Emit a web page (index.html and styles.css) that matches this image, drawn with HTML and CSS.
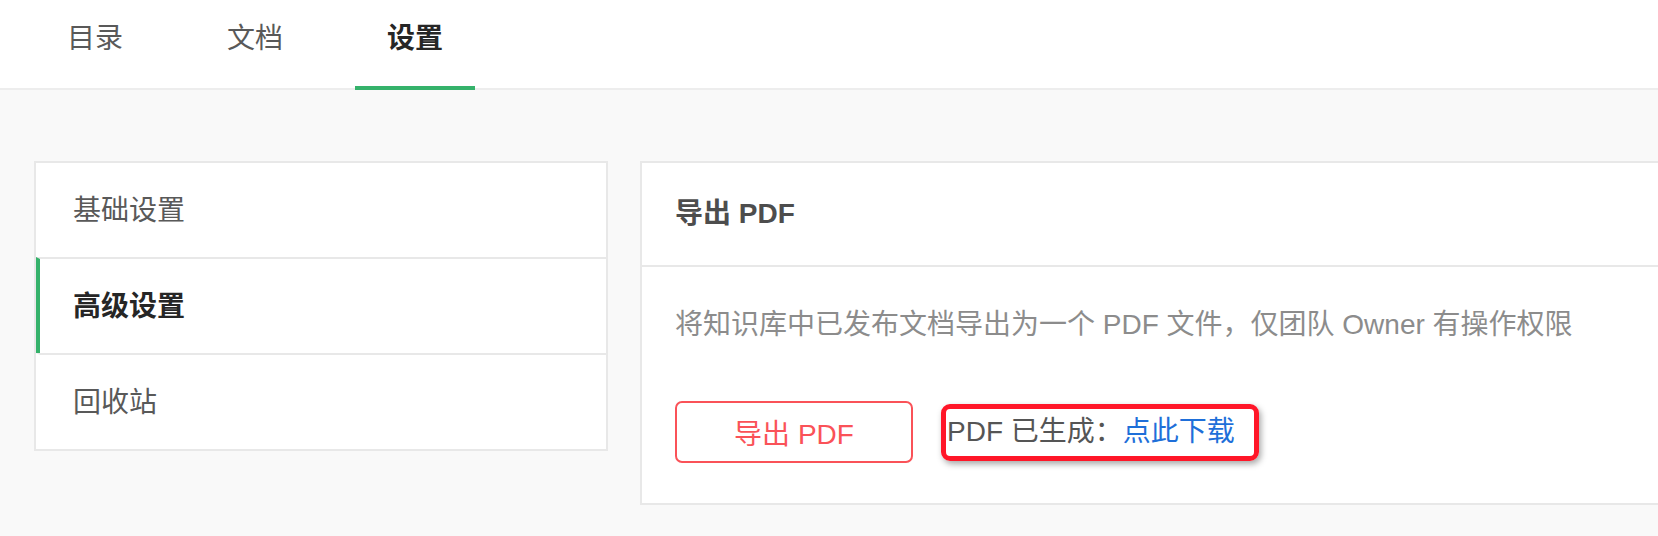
FILE: index.html
```html
<!DOCTYPE html>
<html lang="zh-CN">
<head>
    <meta charset="utf-8">
    <title>设置 - 导出 PDF</title>
    <link rel="stylesheet" href="styles.css">
</head>
<body>
    <div class="top-nav">
        <a class="tab">目录</a>
        <a class="tab">文档</a>
        <a class="tab active">设置</a>
    </div>
    <div class="page">
        <ul class="side-menu">
            <li class="menu-item">基础设置</li>
            <li class="menu-item active">高级设置</li>
            <li class="menu-item">回收站</li>
        </ul>
        <div class="panel">
            <div class="panel-header">导出 PDF</div>
            <div class="panel-body">
                <p class="desc">将知识库中已发布文档导出为一个 PDF 文件，仅团队 Owner 有操作权限</p>
                <div class="actions">
                    <button class="btn-export">导出 PDF</button>
                    <span class="status">PDF 已生成：<a class="download">点此下载</a></span>
                </div>
            </div>
        </div>
    </div>
</body>
</html>
```

FILE: styles.css
```css
/* Base page */
body {
    margin: 0;
    background-color: #f9f9f9;
    font-family: "Liberation Sans", "Noto Sans CJK SC", sans-serif;
    font-size: 28px;
    color: #595959;
    overflow: hidden; /* panel runs past the right edge */
}

/* Top tabs */
.top-nav {
    display: flex;
    gap: 40px;
    height: 90px;
    box-sizing: border-box;
    padding-left: 35px;
    background-color: #fff;
    border-bottom: 2px solid #ededed;
}

.tab {
    width: 120px;
    height: 90px;
    box-sizing: border-box;
    padding-top: 24px;
    line-height: 30px;
    text-align: center;
    color: #595959;
    border-bottom: 4px solid transparent;
}

.tab.active {
    color: #262626;
    font-weight: bold;
    border-bottom-color: #35b26b;
}

/* Content area */
.page {
    display: flex;
    align-items: flex-start;
    gap: 32px;
    padding: 71px 0 0 34px;
}

/* Left menu */
.side-menu {
    list-style: none;
    margin: 0;
    padding: 0;
    width: 574px;
    flex-shrink: 0;
    box-sizing: border-box;
    background-color: #fff;
    border: 2px solid #e8e8e8;
}

.menu-item {
    height: 94px;
    line-height: 96px;
    padding-left: 33px;
    border-top: 2px solid #e8e8e8;
    border-left: 4px solid transparent;
}

.menu-item:first-child {
    border-top: none;
}

.menu-item.active {
    color: #262626;
    font-weight: bold;
    border-left-color: #35b26b;
}

/* Right panel */
.panel {
    width: 1100px;
    flex-shrink: 0;
    background-color: #fff;
    border: 2px solid #e8e8e8;
}

.panel-header {
    height: 102px;
    line-height: 102px;
    padding-left: 33px;
    color: #4d4d4d;
    font-weight: 600;
    border-bottom: 2px solid #e8e8e8;
}

.panel-body {
    padding: 38px 33px 40px;
}

.desc {
    margin: 0 0 56px;
    line-height: 40px;
    color: #8c8c8c;
}

.actions {
    display: flex;
    align-items: center;
}

.btn-export {
    width: 238px;
    height: 62px;
    margin-right: 28px;
    background-color: #fff;
    border: 2px solid #fa5258;
    border-radius: 7px;
    color: #fa5258;
    font-family: inherit;
    font-size: 28px;
}

/* red highlight drawn around the status text */
.status {
    height: 57px;
    line-height: 45px;
    box-sizing: border-box;
    padding: 0 19px 0 1px;
    border: 5px solid #ff1628;
    border-radius: 9px;
    box-shadow: 2px 3px 6px rgba(0, 0, 0, 0.35);
    color: #555;
}

.download {
    color: #1e6fd9;
}
```
